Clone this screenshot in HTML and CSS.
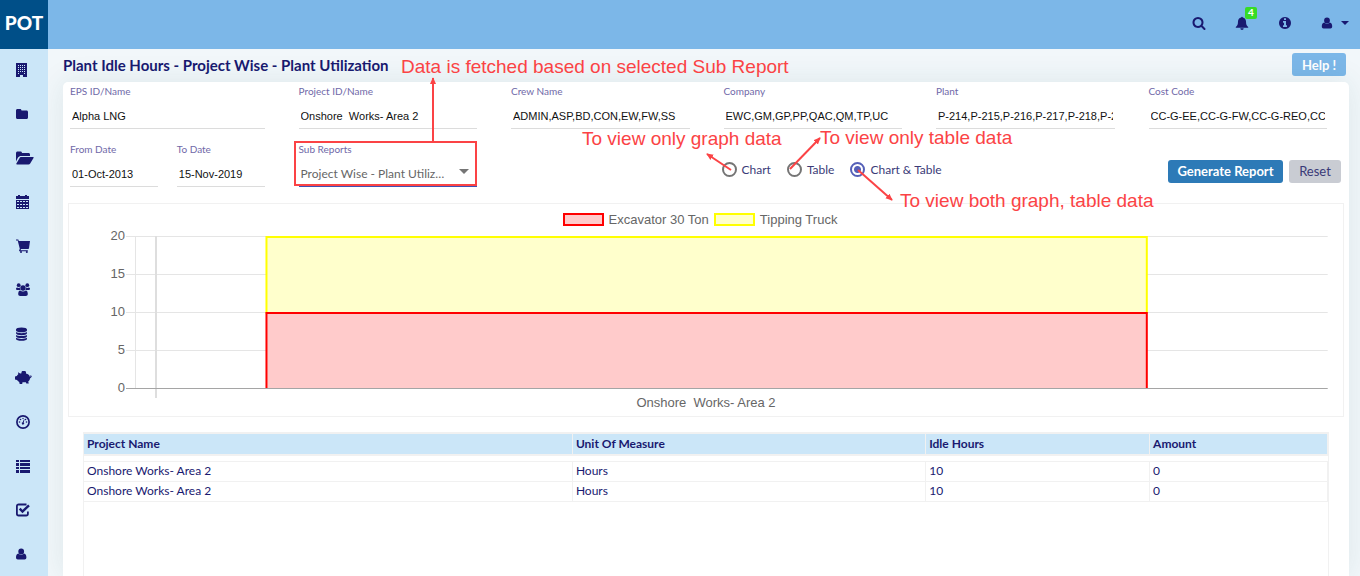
FILE: index.html
```html
<!DOCTYPE html>
<html lang="en">
<head>
<meta charset="utf-8">
<title>Plant Idle Hours</title>
<link rel="stylesheet" href="styles.css">
</head>
<body>
<header class="topbar">
  <a class="brand" href="#">POT</a>
  <div class="tools">
    <button class="tool" aria-label="Search"><svg class="icon" viewBox="0 0 1792 1792"><path d="M1216 832q0-185-131.500-316.500t-316.500-131.500-316.500 131.500-131.500 316.500 131.500 316.500 316.500 131.500 316.500-131.500 131.500-316.500zm512 832q0 52-38 90t-90 38q-54 0-90-38l-343-342q-179 124-399 124-143 0-273.500-55.500t-225-150-150-225-55.500-273.500 55.500-273.500 150-225 225-150 273.500-55.500 273.500 55.500 225 150 150 225 55.500 273.500q0 220-124 399l343 343q37 37 37 90z"/></svg></button>
    <button class="tool" aria-label="Notifications"><svg class="icon" viewBox="0 0 14 14"><path d="M6.200 1.500a.8.800 0 0 1 1.600 0C10 2 11 3.700 11 5.500c0 3 .7 4.300 2.200 5.500v.8H.8V11C2.300 9.800 3 8.500 3 5.500 3 3.700 4 2 6.200 1.500zM5.300 12.200h3.400a1.700 1.700 0 0 1-3.400 0z"/></svg><span class="badge">4</span></button>
    <button class="tool" aria-label="Information"><svg class="icon" viewBox="0 0 1792 1792"><path d="M1152 1376v-160q0-14-9-23t-23-9h-96v-512q0-14-9-23t-23-9h-320q-14 0-23 9t-9 23v160q0 14 9 23t23 9h96v320h-96q-14 0-23 9t-9 23v160q0 14 9 23t23 9h448q14 0 23-9t9-23zm-128-896v-160q0-14-9-23t-23-9h-192q-14 0-23 9t-9 23v160q0 14 9 23t23 9h192q14 0 23-9t9-23zm640 416q0 209-103 385.500t-279.500 279.500-385.500 103-385.500-103-279.500-279.500-103-385.500 103-385.500 279.500-279.500 385.500-103 385.500 103 279.500 279.500 103 385.500z"/></svg></button>
    <button class="tool tool-user" aria-label="Account"><svg class="icon" viewBox="0 0 14 14"><path d="M7 1.500a2.900 2.900 0 1 1 0 5.800 2.900 2.900 0 0 1 0-5.800zM4.200 6.600a3.900 3.900 0 0 0 5.600 0c1.700.2 2.400 1.700 2.400 3.900 0 1.200-.7 2-1.800 2H3.600c-1.100 0-1.800-.8-1.800-2 0-2.200.7-3.700 2.400-3.900z"/></svg><svg class="caret" viewBox="0 0 8 4"><path d="M0 0h8L4 4z"/></svg></button>
  </div>
</header>
<div class="shell">
  <nav class="sidebar">
    <a href="#" aria-label="Company"><svg class="icon" viewBox="0 0 14 14"><path fill-rule="evenodd" d="M0 0h11v14H7v-2H4v2H0zM2 2v1h1V2zm2 0v1h1V2zm2 0v1h1V2zm2 0v1h1V2zM2 4v1h1V4zm2 0v1h1V4zm2 0v1h1V4zm2 0v1h1V4zM2 6v1h1V6zm2 0v1h1V6zm2 0v1h1V6zm2 0v1h1V6zM2 8v1h1V8zm2 0v1h1V8zm2 0v1h1V8zm2 0v1h1V8zM2 10v1h1v-1zm6 0v1h1v-1z"/></svg></a>
    <a href="#" aria-label="Projects"><svg class="icon" viewBox="0 0 14 14"><path d="M0 3.500C0 2.500.7 2 1.500 2H4c.9 0 1.500.6 1.500 1.500h5c.9 0 1.500.6 1.500 1.500v5.500c0 .9-.6 1.500-1.500 1.500h-9C.6 12 0 11.400 0 10.500z"/></svg></a>
    <a href="#" aria-label="Open projects"><svg class="icon wide" viewBox="0 0 18 14"><path d="M0 10.500V2C0 1.200.7.500 1.500.5h3C5.400.5 6 1.200 6 2h6.500c.9 0 1.500.6 1.500 1.500V5H5C3.800 5 2.700 5.600 2 6.500zM4.800 6H17c.6 0 .8.400.5.900l-3.300 5.500c-.4.600-1 1.100-1.700 1.100H.9c-.6 0-.8-.4-.5-.9l3.200-5.700c.3-.5.700-.9 1.200-.9z"/></svg></a>
    <a href="#" aria-label="Calendar"><svg class="icon" viewBox="0 0 14 14"><path fill-rule="evenodd" d="M0 1h2V0h2v1h5V0h2v1h2v3H0zM0 5h13v9H0zM1 6v1h2V6zm3 0v1h2V6zm3 0v1h2V6zm3 0v1h2V6zM1 9v1h2V9zm3 0v1h2V9zm3 0v1h2V9zm3 0v1h2V9zM1 12v1h2v-1zm3 0v1h2v-1zm3 0v1h2v-1zm3 0v1h2v-1z"/></svg></a>
    <a href="#" aria-label="Procurement"><svg class="icon" viewBox="0 0 14 14"><path d="M0 .5h2.300l.5 1.500H14l-1 7.200c-.1.500-.4.800-.9.800H5l-.5 1.200h7.300v1H3.500c-.4 0-.6-.4-.4-.8l.7-1.600L1.700 1.600H0z"/><circle cx="5" cy="13" r="1"/><circle cx="10.800" cy="13" r="1"/></svg></a>
    <a href="#" aria-label="Teams"><svg class="icon" viewBox="0 0 14 14"><circle cx="2.700" cy="2.200" r="1.900"/><circle cx="11.300" cy="2.200" r="1.900"/><circle cx="7" cy="5" r="2.700"/><path d="M1 4.500c1 .5 1.800.5 2.800.1.100 1.200.4 1.800.9 2.400H1.500C.6 7 0 6.600 0 5.800c0-.6.300-1.100 1-1.300zM13 4.500c-1 .5-1.800.5-2.800.1-.1 1.200-.4 1.800-.9 2.400h3.200c.9 0 1.500-.4 1.500-1.200 0-.6-.3-1.100-1-1.300zM4.200 7.500c1.700 1.200 3.900 1.200 5.600 0 1.400.2 2 1.600 2 3.500 0 1.300-.8 2-1.900 2H4.100c-1.100 0-1.900-.7-1.900-2 0-1.900.6-3.300 2-3.500z"/></svg></a>
    <a href="#" aria-label="Database"><svg class="icon" viewBox="0 0 14 14"><path d="M0 2.500C0 1.200 2 .5 5.500.5s5.500.7 5.500 2v.9c0 1.200-2.500 1.800-5.500 1.800S0 4.600 0 3.400zM0 5c2 1.500 9 1.500 11 0v1.300c0 1.200-2.500 1.900-5.500 1.900S0 7.500 0 6.300zM0 7.900c2 1.500 9 1.500 11 0v1.300c0 1.200-2.500 1.900-5.500 1.900S0 10.400 0 9.200zM0 10.800c2 1.500 9 1.500 11 0V12c0 1.200-2.500 1.800-5.500 1.800S0 13.200 0 12z"/></svg></a>
    <a href="#" aria-label="Cost"><svg class="icon wide pig" viewBox="0 0 18 14"><path fill-rule="evenodd" d="M6.500 2.300a2.300 2.300 0 1 1 4.400.2c2.400.6 3.700 1.900 4 3.400l.7-.6-.4-1 1 .2.600 1.300-1.800 1.600c-.2 1.300-.8 2.200-1.800 3l.6 2.100h-2.500l-.4-1.200H7.500L7.200 13H4.700l-.5-2.100C3.200 10.400 2.500 9.700 2 9L0 8.400V5.500L1.800 5c.4-.8.900-1.300 1.500-1.800L3 1.300l2.200 1.100z"/></svg></a>
    <a href="#" aria-label="Dashboard"><svg class="icon" viewBox="0 0 14 14"><circle cx="7" cy="7" r="6.100" fill="none" stroke="currentColor" stroke-width="1.700"/><circle cx="3.500" cy="7" r=".8"/><circle cx="4.500" cy="4.500" r=".8"/><circle cx="7" cy="3.400" r=".7"/><circle cx="9.500" cy="4.500" r=".8"/><circle cx="10.500" cy="7" r=".8"/><path d="M6.700 7.200 7.800 4.400l.7.200-.8 2.800a1.200 1.200 0 1 1-1-.2z"/></svg></a>
    <a href="#" aria-label="Reports"><svg class="icon" viewBox="0 0 14 14"><path d="M0 1h3v2H0zM4 1h10v2H4zM0 4h3v3H0zM4 4h10v3H4zM0 8h3v2H0zM4 8h10v2H4zM0 11h3v3H0zM4 11h10v3H4z"/></svg></a>
    <a href="#" aria-label="Approvals"><svg class="icon" viewBox="0 0 14 14"><path fill="none" stroke="currentColor" stroke-width="1.800" d="M10.500 1.500H2.700C1.600 1.500.9 2.200.9 3.300v7.400c0 1.100.7 1.800 1.800 1.800h7.400c1.100 0 1.800-.7 1.800-1.800V8.500"/><path fill="none" stroke="currentColor" stroke-width="2.400" d="m3.700 5.700 2.800 2.800L13 2.300"/></svg></a>
    <a href="#" aria-label="Profile"><svg class="icon" viewBox="0 0 14 14"><path d="M5.200 1.500a2.900 2.900 0 1 1 0 5.800 2.900 2.900 0 0 1 0-5.800zM2.400 6.600a3.900 3.900 0 0 0 5.600 0c1.700.2 2.400 1.700 2.400 3.900 0 1.200-.7 2-1.800 2H1.800c-1.100 0-1.800-.8-1.800-2 0-2.200.7-3.700 2.400-3.900z"/></svg></a>
  </nav>
  <main class="main">
    <div class="titlebar">
      <h1 class="title">Plant Idle Hours - Project Wise - Plant Utilization</h1>
      <button class="btn btn-help">Help !</button>
    </div>
    <section class="card">
      <form class="filters">
        <div class="filter-row">
          <div class="field"><label for="eps">EPS ID/Name</label><input id="eps" type="text" value="Alpha LNG"></div>
          <div class="field"><label for="project">Project ID/Name</label><input id="project" type="text" value="Onshore  Works- Area 2"></div>
          <div class="field"><label for="crew">Crew Name</label><input id="crew" type="text" value="ADMIN,ASP,BD,CON,EW,FW,SS"></div>
          <div class="field"><label for="company">Company</label><input id="company" type="text" value="EWC,GM,GP,PP,QAC,QM,TP,UC"></div>
          <div class="field"><label for="plant">Plant</label><input id="plant" type="text" value="P-214,P-215,P-216,P-217,P-218,P-219"></div>
          <div class="field"><label for="cost">Cost Code</label><input id="cost" type="text" value="CC-G-EE,CC-G-FW,CC-G-REO,CC-G-SS"></div>
        </div>
        <div class="filter-row">
          <div class="dates">
            <div class="field"><label for="from">From Date</label><input id="from" type="text" value="01-Oct-2013"></div>
            <div class="field"><label for="to">To Date</label><input id="to" type="text" value="15-Nov-2019"></div>
          </div>
          <div class="field field-select"><label for="sub">Sub Reports</label><select id="sub"><option>Project Wise - Plant Utilization</option></select></div>
          <div class="views">
            <label><input type="radio" name="view">Chart</label>
            <label><input type="radio" name="view">Table</label>
            <label><input type="radio" name="view" checked>Chart &amp; Table</label>
          </div>
          <div class="actions">
            <button type="button" class="btn btn-primary">Generate Report</button>
            <button type="button" class="btn btn-reset">Reset</button>
          </div>
        </div>
      </form>
      <div class="chart">
        <div class="legend">
          <span class="key"><i class="swatch swatch-red"></i>Excavator 30 Ton</span>
          <span class="key"><i class="swatch swatch-yellow"></i>Tipping Truck</span>
        </div>
        <svg class="plot" width="100%" height="188">
          <g class="ticks">
            <text x="56" y="12">20</text><text x="56" y="50">15</text><text x="56" y="88">10</text><text x="56" y="126">5</text><text x="56" y="164">0</text>
          </g>
          <g class="grid-lines">
            <line x1="57" x2="98.800%" y1="8.500" y2="8.500"/><line x1="57" x2="98.800%" y1="46.500" y2="46.500"/><line x1="57" x2="98.800%" y1="84.500" y2="84.500"/><line x1="57" x2="98.800%" y1="122.500" y2="122.500"/>
            <line x1="66.500" x2="66.500" y1="8" y2="160"/>
            <line class="axis" x1="87" x2="87" y1="8" y2="170"/>
          </g>
          <rect class="bar-yellow" x="15.500%" y="9" width="69.100%" height="76"/>
          <rect class="bar-red" x="15.500%" y="85" width="69.100%" height="90"/>
          <rect class="mask" x="15%" y="160" width="70%" height="20"/>
          <line class="zero" x1="57" x2="98.800%" y1="160.500" y2="160.500"/>
          <text class="category" x="50%" y="179">Onshore  Works- Area 2</text>
        </svg>
      </div>
      <div class="grid">
        <table class="report">
          <colgroup><col class="c1"><col class="c2"><col class="c3"><col class="c4"></colgroup>
          <thead><tr><th>Project Name</th><th>Unit Of Measure</th><th>Idle Hours</th><th>Amount</th></tr></thead>
          <tbody>
            <tr><td>Onshore Works- Area 2</td><td>Hours</td><td>10</td><td>0</td></tr>
            <tr><td>Onshore Works- Area 2</td><td>Hours</td><td>10</td><td>0</td></tr>
          </tbody>
        </table>
      </div>
    </section>
  </main>
</div>
<svg class="notes" width="1360" height="576">
  <defs><marker id="tip" viewBox="0 0 8 8" refX="7" refY="4" markerWidth="7" markerHeight="7" markerUnits="userSpaceOnUse" orient="auto"><path d="M0 0.500 8 4 0 7.500z"/></marker></defs>
  <rect x="295" y="142" width="181" height="43"/>
  <line x1="433" y1="142" x2="433" y2="78"/>
  <line x1="731" y1="170" x2="707" y2="154"/>
  <line x1="790" y1="169" x2="820" y2="138"/>
  <line x1="858" y1="170" x2="892" y2="200"/>
  <text x="401" y="73">Data is fetched based on selected Sub Report</text>
  <text x="582" y="145">To view only graph data</text>
  <text x="820" y="144">To view only table data</text>
  <text x="900" y="207">To view both graph, table data</text>
</svg>
</body>
</html>
```
FILE: styles.css
```css
* { box-sizing: border-box; }
body {
  margin: 0;
  height: 100vh;
  display: flex;
  flex-direction: column;
  overflow: hidden;
  position: relative;
  background: #f2f7fa;
  color: #191970;
  font-family: Lato, sans-serif;
  font-size: 12px;
}
button, input, select { font: inherit; color: inherit; margin: 0; }
a { color: inherit; text-decoration: none; }
.icon { width: 14px; height: 14px; fill: currentColor; display: block; }
.icon.wide { width: 18px; }
.icon.pig { margin-left: -1px; }

.topbar {
  flex: none;
  height: 49px;
  display: flex;
  justify-content: space-between;
  align-items: center;
  background: #7cb7e8;
}
.brand {
  width: 48px;
  height: 49px;
  line-height: 45px;
  text-align: center;
  background: #004f88;
  color: #fff;
  font-size: 19px;
  font-weight: 900;
}
.tools { display: flex; gap: 29px; padding: 0 11px 3px 0; }
.tool {
  position: relative;
  display: flex;
  align-items: center;
  padding: 0;
  border: 0;
  background: none;
}
.tool-user { gap: 7px; margin-left: -1px; }
.caret { width: 8px; height: 4px; fill: currentColor; }
.badge {
  position: absolute;
  left: 10px;
  top: -9px;
  width: 12px;
  height: 12px;
  border-radius: 2px;
  background: #37dc26;
  color: #fff;
  font-size: 10px;
  font-weight: 700;
  line-height: 11px;
  text-align: center;
}

.shell { flex: 1; min-height: 0; display: flex; }
.sidebar { position: relative; z-index: 1; flex: none; width: 48px; background: #cbe6f8; overflow: hidden; }
.sidebar a { display: flex; align-items: center; height: 44px; padding: 0 0 2px 16px; }
.main { flex: 1; min-width: 0; display: flex; flex-direction: column; padding: 0 11px 0 15px; overflow: hidden; }
.titlebar {
  flex: none;
  height: 33px;
  display: flex;
  align-items: center;
  justify-content: space-between;
  padding: 0 3px 2px 0;
}
.title { margin: 0; font-size: 15px; font-weight: 700; }
.btn {
  height: 23px;
  padding: 0;
  border: 0;
  border-radius: 3px;
  font-size: 13px;
  font-weight: 700;
}
.btn-help { width: 54px; background: #7cb7e8; color: #fff; }
.btn-primary { width: 115px; background: #2d7ab7; color: #fff; }
.btn-reset { width: 52px; background: #c9ccd3; color: #3a3a78; font-weight: 400; }
.card {
  flex: 1;
  min-height: 0;
  display: flex;
  flex-direction: column;
  padding: 0 5px;
  border-radius: 5px 5px 0 0;
  background: #fff;
  box-shadow: 0 0 30px rgba(30, 90, 90, 0.1);
}

.filters { flex: none; height: 121px; padding: 1px 17px 0 2px; }
.filter-row {
  display: grid;
  grid-template-columns: 194fr 178fr 178fr 178fr 178fr 178fr;
  column-gap: 34px;
  height: 58px;
}
.field { display: flex; flex-direction: column; min-width: 0; }
.field label { height: 16px; line-height: 16px; font-size: 10px; color: #7069a8; }
.field input {
  width: 100%;
  min-width: 0;
  height: 30px;
  padding: 5px 2px 0;
  border: 0;
  border-bottom: 1px solid #dcdcdc;
  background: none;
  color: #111;
  font-family: "Liberation Sans", Arial, sans-serif;
  font-size: 11px;
}
.dates { display: grid; grid-template-columns: 1fr 1fr; gap: 19px; }
.field-select select {
  appearance: none;
  width: 100%;
  height: 30px;
  padding: 4px 30px 0 2px;
  border: 0;
  border-bottom: 1px solid #3f51b5;
  background: none;
  color: #666;
  font-size: 12px;
  text-overflow: ellipsis;
}
.field-select { position: relative; }
.field-select::after {
  content: "";
  position: absolute;
  right: 8px;
  top: 28px;
  border: 5px solid transparent;
  border-top: 5px solid #757575;
  border-bottom: 0;
}
.views { grid-column: 4 / 6; display: flex; gap: 16px; height: 56px; align-items: center; margin-left: -2px; }
.views label { display: flex; align-items: center; gap: 5px; color: #3b3b78; white-space: nowrap; }
.views input {
  appearance: none;
  width: 15px;
  height: 15px;
  border: 2px solid #757575;
  border-radius: 50%;
}
.views input:checked {
  border-color: #5560b8;
  background: radial-gradient(circle, #5560b8 3px, #fff 4px);
}
.actions { display: flex; gap: 6px; justify-content: flex-end; align-items: center; height: 60px; margin-right: -14px; }
.actions .btn { flex: none; }

.chart { flex: none; border: 1px solid #f1f1f1; height: 214px; }
.legend {
  display: flex;
  justify-content: center;
  gap: 5px;
  height: 24px;
  padding: 7px 12px 0 0;
  color: #666;
  font-family: "Liberation Sans", Arial, sans-serif;
  font-size: 13px;
}
.key { display: flex; align-items: center; gap: 5px; height: 17px; }
.swatch { width: 41px; height: 13px; border: 2px solid; }
.swatch-red { border-color: #f00; background: #ffcbcb; }
.swatch-yellow { border-color: #ff0; background: #ffc; }
.plot { display: block; }
.plot text { fill: #666; font-family: "Liberation Sans", Arial, sans-serif; font-size: 13px; }
.ticks { text-anchor: end; }
.plot .category { text-anchor: middle; white-space: pre; }
.grid-lines line { stroke: #e5e5e5; }
.grid-lines .axis { stroke: #dedede; stroke-width: 2; }
.bar-yellow { fill: #ffc; stroke: #ff0; stroke-width: 2; }
.bar-red { fill: #ffcbcb; stroke: #f00; stroke-width: 2; }
.mask { fill: #fff; }
.zero { stroke: #a5a5a5; }

.grid {
  flex: 1;
  min-height: 0;
  margin: 15px 15px 0;
  border: 1px solid #f1f1f1;
  border-bottom: 0;
}
.report { width: 100%; table-layout: fixed; border-collapse: separate; border-spacing: 0; }
.c1 { width: 39.300%; }
.c2 { width: 28.400%; }
.c3 { width: 18%; }
.report th, .report td {
  height: 20px;
  padding: 0 3px 2px;
  border-right: 1px solid #f1f1f1;
  border-bottom: 1px solid #f1f1f1;
  text-align: left;
  line-height: 17px;
}
.report th { height: 23px; background: #cbe6f8; border-top: 1px solid #f1f1f1; border-bottom-width: 2px; font-weight: 700; }
.report tbody::before { content: ""; display: block; height: 5px; }
.report tbody tr:first-child td { height: 21px; border-top: 1px solid #f1f1f1; }

.notes { position: absolute; left: 0; top: 0; z-index: 2; pointer-events: none; }
.notes rect, .notes line { fill: none; stroke: #fb4345; stroke-width: 2; }
.notes line { marker-end: url(#tip); }
.notes marker path { fill: #fb4345; }
.notes text { fill: #fb4345; font-family: "Liberation Sans", Arial, sans-serif; font-size: 19px; }
```
